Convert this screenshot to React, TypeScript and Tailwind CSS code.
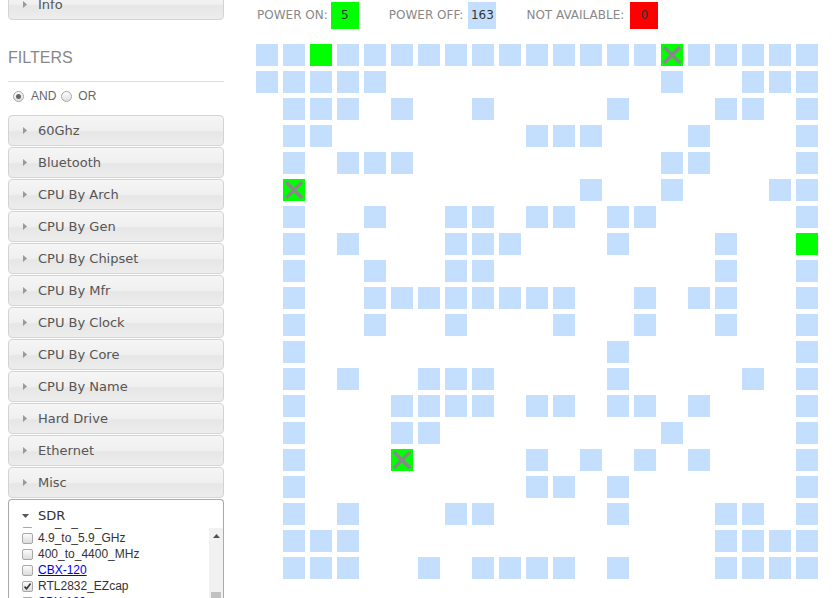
// each row lists the occupied columns (21 columns, 20 rows)
const ROWS: number[][] = [
  [0, 1, 2, 3, 4, 5, 6, 7, 8, 9, 10, 11, 12, 13, 14, 15, 16, 17, 18, 19, 20],
  [0, 1, 2, 3, 4, 15, 18, 19, 20],
  [1, 2, 3, 5, 8, 13, 17, 18, 20],
  [1, 2, 10, 11, 12, 16, 20],
  [1, 3, 4, 5, 15, 16, 20],
  [1, 12, 15, 19, 20],
  [1, 4, 7, 8, 10, 11, 13, 14, 20],
  [1, 3, 7, 8, 9, 13, 17, 20],
  [1, 4, 7, 8, 17, 20],
  [1, 4, 5, 6, 7, 8, 9, 10, 11, 14, 16, 17, 20],
  [1, 4, 7, 11, 14, 17, 20],
  [1, 13, 20],
  [1, 3, 6, 7, 8, 13, 18, 20],
  [1, 5, 6, 7, 8, 10, 11, 13, 14, 16, 20],
  [1, 5, 6, 15, 20],
  [1, 5, 10, 12, 14, 16, 20],
  [1, 10, 11, 13, 20],
  [1, 3, 7, 8, 13, 17, 18, 20],
  [1, 2, 3, 17, 18, 19, 20],
  [1, 2, 3, 6, 8, 9, 10, 11, 13, 17, 18, 19, 20],
];

// powered on nodes; "x" ones are marked with a cross
const ON: Record<string, "g" | "x"> = {
  "0-2": "g",
  "0-15": "x",
  "5-1": "x",
  "7-20": "g",
  "15-5": "x",
};

const FILTERS = [
  "60Ghz",
  "Bluetooth",
  "CPU By Arch",
  "CPU By Gen",
  "CPU By Chipset",
  "CPU By Mfr",
  "CPU By Clock",
  "CPU By Core",
  "CPU By Name",
  "Hard Drive",
  "Ethernet",
  "Misc",
];

const SDR_ITEMS: { name: string; link?: boolean; checked?: boolean }[] = [
  { name: "0.1_to_6_GHz" },
  { name: "1090_MHz" },
  { name: "2.3_to_2.4_GHz" },
  { name: "2.4_GHz" },
  { name: "2.4_to_2.5_GHz" },
  { name: "4.9_to_5.9_GHz" },
  { name: "400_to_4400_MHz" },
  { name: "CBX-120", link: true },
  { name: "RTL2832_EZcap", checked: true },
  { name: "SBX-120", link: true },
  { name: "UBX-160" },
  { name: "USRP_B200" },
  { name: "USRP_B210" },
  { name: "USRP_N210" },
  { name: "USRP_X310" },
  { name: "WBX-40" },
];

function Header({ label, first }: { label: string; first?: boolean }) {
  return (
    <div
      className={`${first ? "" : "mt-[1px]"} flex h-[31px] items-center rounded-[4px] border border-[#d3d3d3] bg-[linear-gradient(#f5f5f5,#f0f0f0_48%,#e6e6e6_56%,#ededed)] pl-[14px] text-[13px] text-[#555]`}
    >
      <svg width="4" height="7" viewBox="0 0 4 7">
        <polygon points="0,0 4,3.5 0,7" fill="#999" />
      </svg>
      <span className="ml-[11px]">{label}</span>
    </div>
  );
}

function Radio({ checked }: { checked?: boolean }) {
  return (
    <span className="flex h-[11px] w-[11px] items-center justify-center rounded-full border border-[#a8a8a8] bg-[linear-gradient(#fdfdfd,#dedede)]">
      {checked && <span className="h-[5px] w-[5px] rounded-full bg-[#666]" />}
    </span>
  );
}

function Checkbox({ checked }: { checked?: boolean }) {
  return (
    <span className="flex h-[11px] w-[11px] shrink-0 items-center justify-center rounded-[2px] border border-[#a8a8a8] bg-[linear-gradient(#fbfbfb,#dcdcdc)]">
      {checked && (
        <svg width="9" height="9" viewBox="0 0 9 9">
          <path d="M1.5 4.6 L3.6 6.8 L7.6 1.6" fill="none" stroke="#333" strokeWidth="1.6" />
        </svg>
      )}
    </span>
  );
}

function Cell({ kind }: { kind: "b" | "g" | "x" | null }) {
  if (!kind) return <div className="h-[22px] w-[22px]" />;
  if (kind === "b") return <div className="h-[22px] w-[22px] bg-[#c4dffd]" />;
  return (
    <div className="h-[22px] w-[22px] bg-[#00ff00]">
      {kind === "x" && (
        <svg width="22" height="22" viewBox="0 0 22 22">
          <path d="M3 3 L19 19 M19 3 L3 19" stroke="#888" strokeWidth="3.6" />
        </svg>
      )}
    </div>
  );
}

export default function App() {
  return (
    <div className="flex h-[598px] overflow-hidden bg-white pl-[8px] font-['DejaVu_Sans',sans-serif]">
      {/* sidebar */}
      <div className="-mt-[11px] w-[216px] shrink-0">
        <Header label="Info" first />

        <h2 className="mt-[28px] h-[20px] font-['Liberation_Sans',Arial,sans-serif] text-[16px] leading-[20px] text-[#888]">
          FILTERS
        </h2>
        <div className="mt-[13px] border-t border-[#dddddd]" />

        <div className="mt-[6px] flex h-[16px] items-center font-['Liberation_Sans',Arial,sans-serif] text-[12px] text-[#666]">
          <span className="ml-[5px]">
            <Radio checked />
          </span>
          <span className="ml-[7px]">AND</span>
          <span className="ml-[5px]">
            <Radio />
          </span>
          <span className="ml-[6px]">OR</span>
        </div>

        <div className="mt-[11px]">
          {FILTERS.map((f, i) => (
            <Header key={f} label={f} first={i === 0} />
          ))}

          <div className="mt-[1px] flex h-[28px] items-start rounded-t-[4px] border-x border-t border-[#aaaaaa] bg-white pl-[13px] pt-[6px] text-[13px] leading-[20px] text-[#333]">
            <svg width="7" height="4" viewBox="0 0 7 4" className="mt-[8px]">
              <polygon points="0,0 7,0 3.5,4" fill="#555" />
            </svg>
            <span className="ml-[9px]">SDR</span>
          </div>
          <div className="flex h-[220px] border-x border-b border-[#aaaaaa] bg-white">
            <div className="flex-1 overflow-hidden font-['Liberation_Sans',Arial,sans-serif] text-[12px] text-[#333]">
              <div className="-mt-[77px]">
                {SDR_ITEMS.map((it) => (
                  <div key={it.name} className="flex h-[16px] items-center pl-[13px]">
                    <Checkbox checked={it.checked} />
                    {it.link ? (
                      <a href="#" className="ml-[5px] text-[#0000ee] underline">
                        {it.name}
                      </a>
                    ) : (
                      <span className="ml-[5px]">{it.name}</span>
                    )}
                  </div>
                ))}
              </div>
            </div>
            {/* scrollbar */}
            <div className="mt-[1px] flex w-[14px] flex-col bg-[#f1f1f1]">
              <div className="flex h-[15px] items-center justify-center">
                <svg width="7" height="4" viewBox="0 0 7 4">
                  <polygon points="0,4 7,4 3.5,0" fill="#505050" />
                </svg>
              </div>
              <div className="mx-[2px] mt-[49px] h-[120px] bg-[#c1c1c1]" />
            </div>
          </div>
        </div>
      </div>

      {/* node map */}
      <div className="flex-1 pl-[32px]">
        <div className="flex items-center pl-[1px] pt-[2px] text-[12px] leading-[27px]">
          <span className="text-[#888]">POWER ON:</span>
          <span className="ml-[3px] flex h-[27px] w-[28px] items-center justify-center bg-[#00ff00] text-[#333]">
            5
          </span>
          <span className="ml-[30px] text-[#888]">POWER OFF:</span>
          <span className="ml-[5px] flex h-[27px] w-[28px] items-center justify-center bg-[#c4dffd] text-[#333]">
            163
          </span>
          <span className="ml-[30px] text-[#888]">NOT AVAILABLE:</span>
          <span className="ml-[6px] flex h-[27px] w-[28px] items-center justify-center bg-[#ff0000] text-[#333]">
            0
          </span>
        </div>

        <div className="mt-[15px] grid grid-cols-[repeat(21,22px)] gap-[5px]">
          {ROWS.map((cols, r) =>
            Array.from({ length: 21 }, (_, c) => {
              const on = ON[`${r}-${c}`];
              const kind = on ? on : cols.includes(c) ? "b" : null;
              return <Cell key={`${r}-${c}`} kind={kind} />;
            })
          )}
        </div>
      </div>
    </div>
  );
}
